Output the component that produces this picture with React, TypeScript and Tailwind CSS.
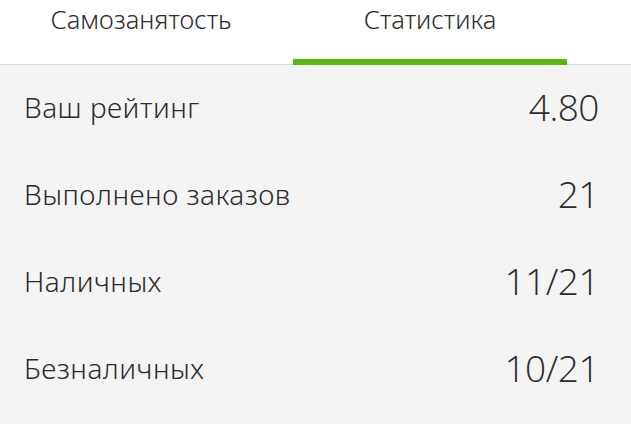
import React from "react";

const TABS = ["Самозанятость", "Статистика"];

const STATS = [
  { label: "Ваш рейтинг", value: "4.80" },
  { label: "Выполнено заказов", value: "21" },
  { label: "Наличных", value: "11/21" },
  { label: "Безналичных", value: "10/21" },
];

export default function App() {
  const active = 1;
  return (
    <div className="w-[631px] h-[424px] overflow-hidden bg-[#f4f4f4] font-['Noto_Sans',sans-serif] font-light text-[#2b2b2b]">
      <div className="flex h-[65px] bg-white border-b border-[#d9d9d9] pl-[4px]">
        {TABS.map((tab, i) => (
          <div
            key={tab}
            className={
              "relative w-[274px] flex justify-center pt-[3px] text-[25.5px] leading-[32px] " +
              (i === 0 ? "mr-[15px]" : "")
            }
          >
            {tab}
            {i === active && (
              <span className="absolute left-0 right-0 bottom-[-1px] h-[6px] bg-[#55bb0c]" />
            )}
          </div>
        ))}
      </div>
      <div className="flex flex-col px-[24px] pr-[32px]">
        {STATS.map((s) => (
          <div key={s.label} className="flex items-center justify-between h-[87px] pb-[3px]">
            <span className="text-[28px] tracking-[0.5px]">{s.label}</span>
            <span className="text-[37px] font-['Open_Sans',sans-serif] font-light tracking-[-0.5px] [font-stretch:90%]">
              {s.value}
            </span>
          </div>
        ))}
      </div>
    </div>
  );
}
